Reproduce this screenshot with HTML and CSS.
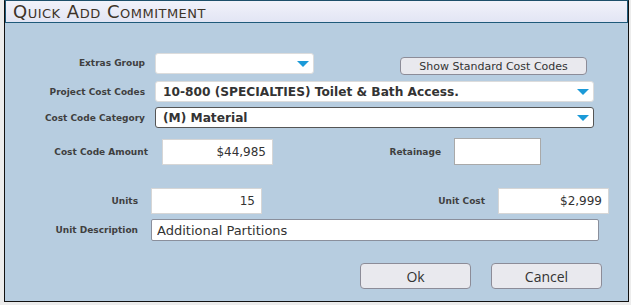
FILE: index.html
```html
<!DOCTYPE html>
<html lang="en">
<head>
  <meta charset="UTF-8">
  <title>Quick Add Commitment</title>
  <link rel="stylesheet" href="styles.css">
</head>
<body>
  <div class="dialog">
    <div class="dialog-header">Quick Add Commitment</div>

    <div class="dialog-body">
      <div class="row row-extras">
        <label class="lbl lbl-top">Extras Group</label>
        <div class="dropdown dd-short">
          <span class="dd-text"></span>
          <svg class="dd-arrow" width="12" height="6" viewBox="0 0 12 6"><path d="M0 0h12L6 6z" fill="#1b9ad8"/></svg>
        </div>
        <button class="btn btn-std">Show Standard Cost Codes</button>
      </div>

      <div class="row row-codes">
        <label class="lbl lbl-top">Project Cost Codes</label>
        <div class="dropdown dd-wide">
          <span class="dd-text">10-800 (SPECIALTIES) Toilet &amp; Bath Access.</span>
          <svg class="dd-arrow" width="12" height="6" viewBox="0 0 12 6"><path d="M0 0h12L6 6z" fill="#1b9ad8"/></svg>
        </div>
      </div>

      <div class="row row-category">
        <label class="lbl lbl-top">Cost Code Category</label>
        <div class="dropdown dd-wide focused">
          <span class="dd-text">(M) Material</span>
          <svg class="dd-arrow" width="12" height="6" viewBox="0 0 12 6"><path d="M0 0h12L6 6z" fill="#1b9ad8"/></svg>
        </div>
      </div>

      <div class="row row-amount">
        <label class="lbl lbl-amount">Cost Code Amount</label>
        <input class="field num f-amount" type="text" value="$44,985">
        <label class="lbl lbl-retain">Retainage</label>
        <input class="field f-retain" type="text" value="">
      </div>

      <div class="row row-units">
        <label class="lbl lbl-units">Units</label>
        <input class="field num f-units" type="text" value="15">
        <label class="lbl lbl-unitcost">Unit Cost</label>
        <input class="field num f-unitcost" type="text" value="$2,999">
      </div>

      <div class="row row-desc">
        <label class="lbl lbl-units">Unit Description</label>
        <input class="field f-desc" type="text" value="Additional Partitions">
      </div>

      <div class="row row-actions">
        <button class="btn btn-action">Ok</button>
        <button class="btn btn-action">Cancel</button>
      </div>
    </div>
  </div>
</body>
</html>
```

FILE: styles.css
```css
body {
  margin: 0;
  background-color: #ececec;
  font-family: "DejaVu Sans", Verdana, sans-serif;
  color: #3b3b3b;
}

.dialog {
  width: 623px;
  margin-left: 4px;
  border: 1px solid #111;
  border-top-color: #1d4f6a;
  background-color: #b7cde0;
}

.dialog-header {
  height: 21px;
  padding-left: 7px;
  border: 1px solid #1f5a7a;
  border-top: none;
  background: linear-gradient(#f1f2fa, #e2e5f4);
  font-size: 18px;
  line-height: 22px;
  letter-spacing: 0.5px;
  font-variant: small-caps;
  color: #3d3328;
}

.dialog-body {
  padding-bottom: 12px;
}

.row {
  display: flex;
  align-items: center;
}

.lbl {
  font-size: 9px;
  font-weight: bold;
  text-align: right;
  color: #3f3f3f;
}

.lbl-top { width: 140px; margin-right: 10px; }
.lbl-amount { width: 143px; margin-right: 14px; }
.lbl-retain { width: 168px; margin-right: 13px; }
.lbl-units { width: 133px; margin-right: 13px; }
.lbl-unitcost { width: 223px; margin-right: 13px; }

/* dropdowns */
.dropdown {
  box-sizing: border-box;
  height: 21px;
  display: flex;
  align-items: center;
  justify-content: space-between;
  padding: 0 4px 0 7px;
  background-color: #fff;
  border: 1px solid #dcdcdc;
  border-radius: 3px;
}

.dropdown.focused {
  border-color: #555;
}

.dd-short { width: 159px; }
.dd-wide { width: 439px; }

.dd-text {
  font-size: 12.2px;
  font-weight: bold;
  color: #333;
  white-space: nowrap;
}

.dd-arrow {
  flex-shrink: 0;
  margin-top: 1px;
}

/* inputs */
.field {
  box-sizing: border-box;
  height: 26px;
  margin: 0;
  padding: 0 6px;
  border: 1px solid #d6d6d6;
  background-color: #fff;
  font-family: "DejaVu Sans", Verdana, sans-serif;
  font-size: 12px;
  color: #333;
  outline: none;
}

.field.num { text-align: right; }

.f-amount { width: 111px; }
.f-retain { width: 87px; height: 27px; border-color: #a9a9a9; }
.f-units { width: 111px; }
.f-unitcost { width: 111px; }
.f-desc {
  width: 448px;
  height: 22px;
  padding-left: 5px;
  border-color: #8a8f9c;
  border-radius: 2px;
  font-size: 13px;
}

/* buttons */
.btn {
  box-sizing: border-box;
  margin: 0;
  padding: 0;
  background-color: #e9e9ee;
  border: 1px solid #8c8c98;
  border-radius: 4px;
  color: #333;
  cursor: pointer;
}

.btn-std {
  width: 187px;
  height: 18px;
  margin-left: 86px;
  margin-top: 4px;
  font-family: "DejaVu Sans", Verdana, sans-serif;
  font-size: 11px;
}

.btn-action {
  width: 111px;
  height: 26px;
  font-family: "Open Sans", sans-serif;
  font-size: 14px;
}

.btn-action + .btn-action { margin-left: 20px; }

/* row spacing */
.row-extras { margin-top: 30px; align-items: flex-start; }
.row-extras .lbl { line-height: 21px; }
.row-codes { margin-top: 6px; }
.row-category { margin-top: 5px; }
.row-amount { margin-top: 10px; }
.row-units { margin-top: 23px; }
.row-desc { margin-top: 5px; }
.row-actions { margin-top: 22px; padding-left: 355px; }
```
